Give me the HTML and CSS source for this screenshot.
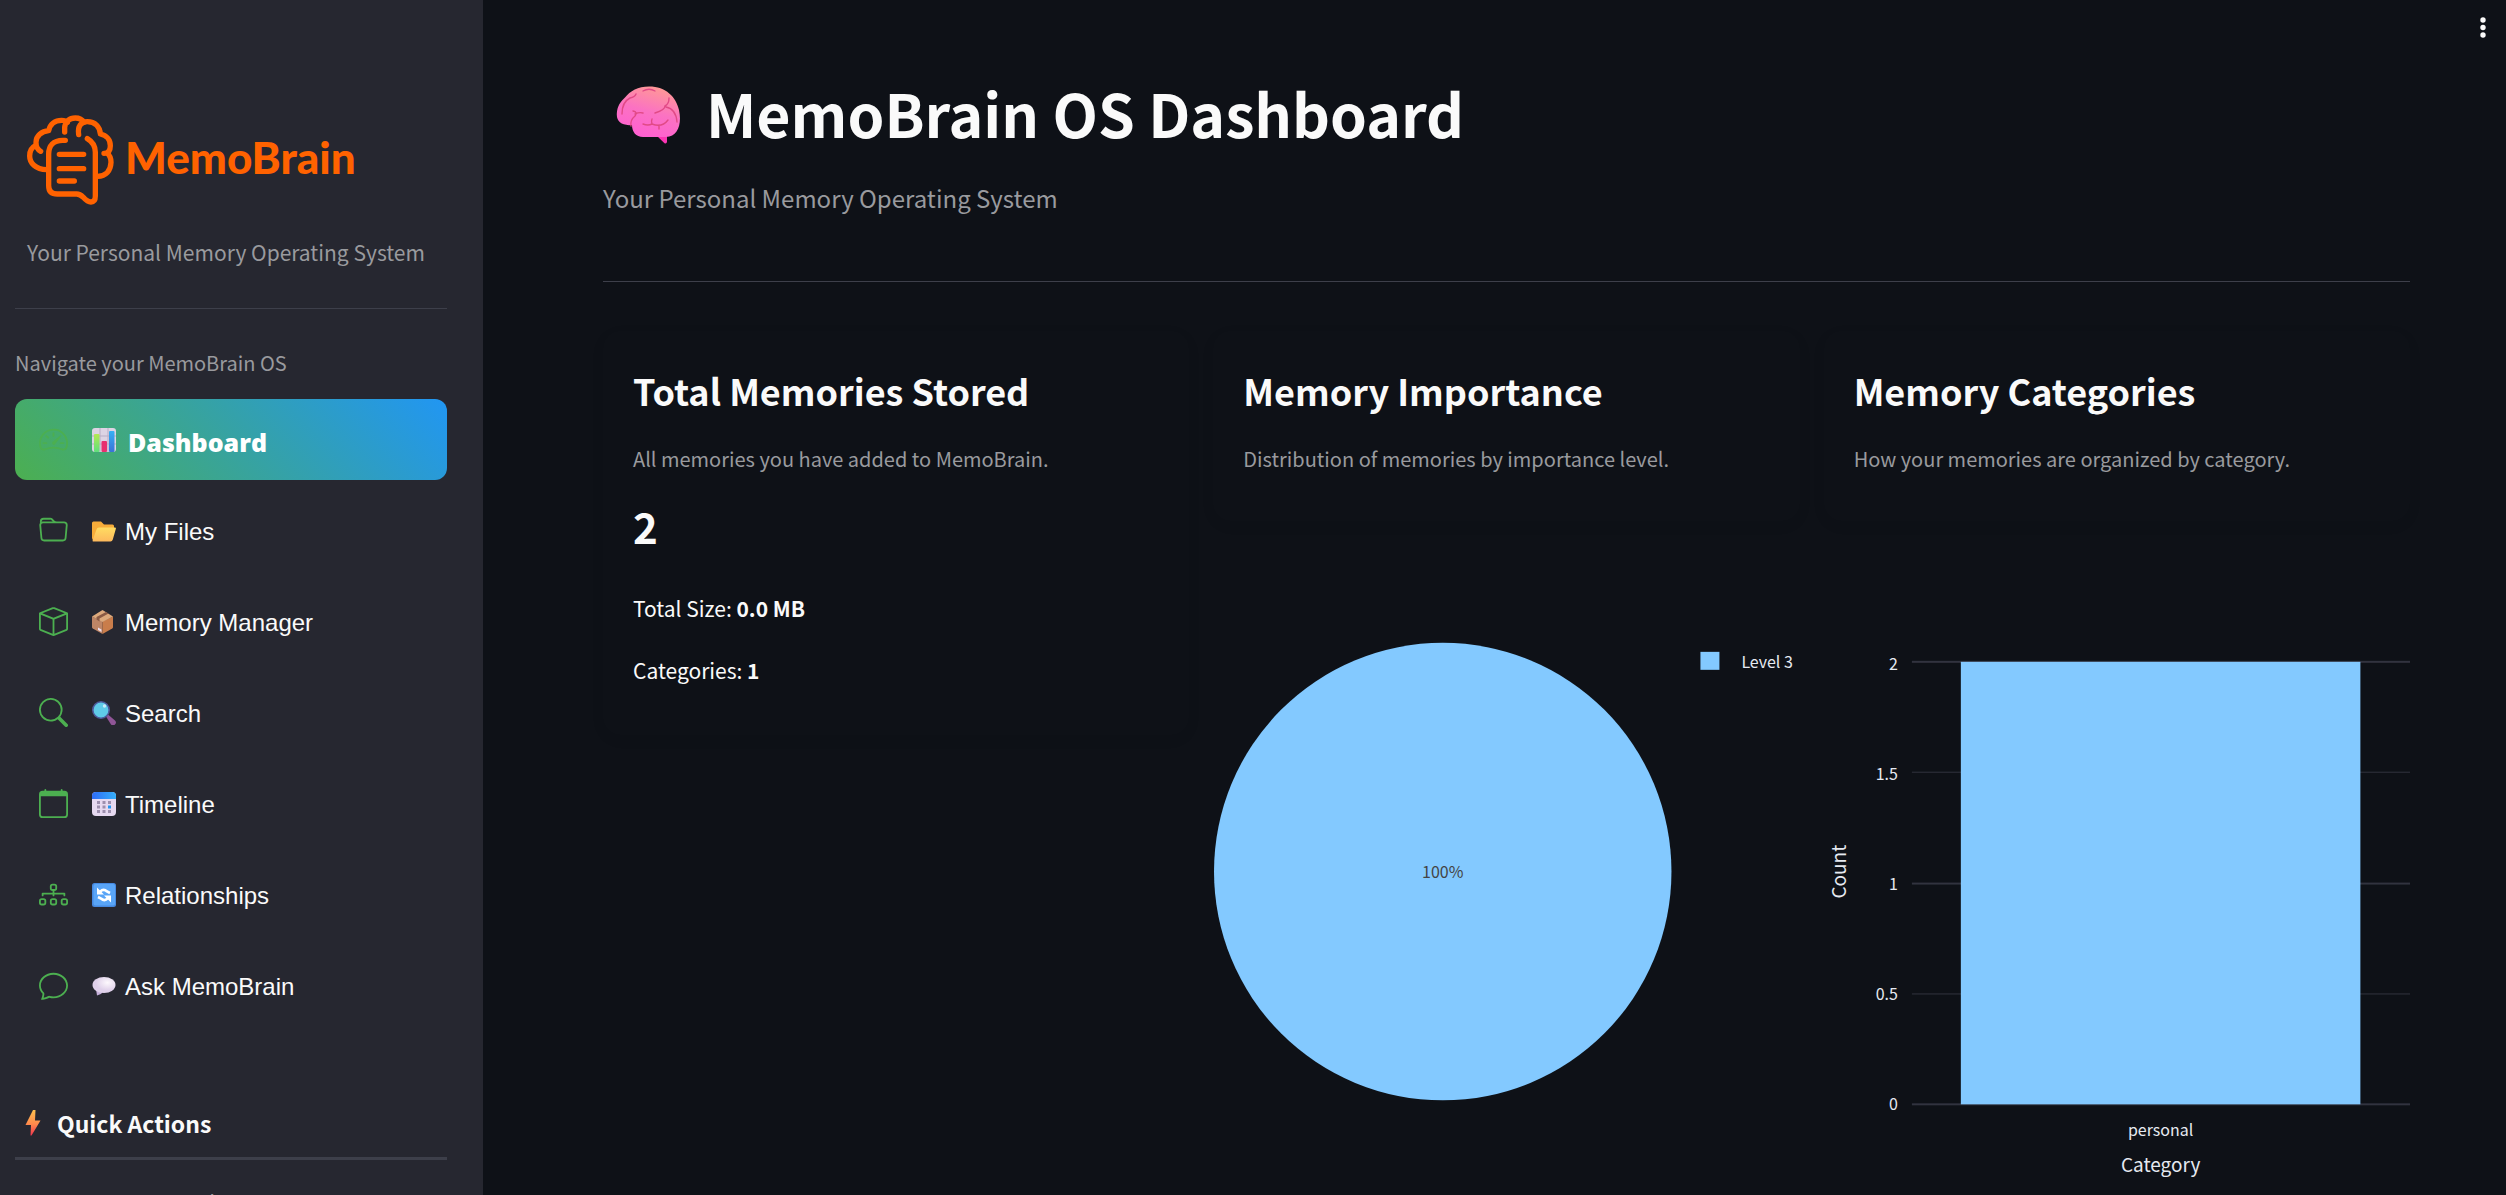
FILE: index.html
```html
<!DOCTYPE html>
<html lang="en">
<head>
<meta charset="utf-8">
<title>MemoBrain OS Dashboard</title>
<link rel="stylesheet" href="styles.css">
</head>
<body>
<div class="app">
  <aside class="sidebar">
    <div class="logo">
      <svg class="logo-mark" viewBox="78 70 267 276" fill="none" stroke="#ff6200" stroke-width="16" stroke-linecap="round" stroke-linejoin="round" aria-hidden="true">
        <path d="M196 149H188C160 149 146 165 146 190V285Q146 310 172 310H230Q240 310 250 320Q262 334 273 334Q286 334 286 316V185Q286 158 262 144"/>
        <path d="M178 191H251M178 234H251M178 271H223"/>
        <path d="M140 237C106 237 89 216 89 196C89 180 96 170 106 165"/>
        <path d="M122 182C112 177 108 168 108 155C108 135 125 122 146 120C150 100 165 89 185 89Q197 89 202 95"/>
        <path d="M194 124V110C196 92 208 82 226 82C238 82 247 87 252 95"/>
        <path d="M236 132C232 106 244 93 262 93C285 93 300 108 301 130C320 134 331 148 331 165C331 180 325 188 312 188"/>
        <path d="M322 188C330 195 333 205 333 215C332 240 318 256 293 257"/>
      </svg>
      <span class="logo-name">MemoBrain</span>
    </div>
    <p class="tagline">Your Personal Memory Operating System</p>
    <hr class="rule">
    <p class="nav-label">Navigate your MemoBrain OS</p>
    <nav class="nav">
      <a class="nav-item active" href="#dashboard">
        <svg class="nav-icon" viewBox="0 0 16 16" fill="currentColor" aria-hidden="true"><path d="M8 4a.5.5 0 0 1 .5.5V6a.5.5 0 0 1-1 0V4.500A.5.5 0 0 1 8 4zM3.732 5.732a.5.5 0 0 1 .707 0l.915.914a.5.5 0 1 1-.708.708l-.914-.915a.5.5 0 0 1 0-.707zM2 10a.5.5 0 0 1 .5-.5h1.586a.5.5 0 0 1 0 1H2.500A.5.5 0 0 1 2 10zm9.500 0a.5.5 0 0 1 .5-.5h1.500a.5.5 0 0 1 0 1H12a.5.5 0 0 1-.5-.5zm.754-4.246a.389.389 0 0 0-.527-.02L7.547 9.310a.91.91 0 1 0 1.302 1.258l3.434-4.297a.389.389 0 0 0-.029-.518z"/><path fill-rule="evenodd" d="M0 10a8 8 0 1 1 15.547 2.661c-.442 1.253-1.845 1.602-2.932 1.250C11.309 13.488 9.475 13 8 13c-1.474 0-3.310.488-4.615.911-1.087.352-2.490.003-2.932-1.250A7.988 7.988 0 0 1 0 10zm8-7a7 7 0 0 0-6.603 9.329c.203.575.923.876 1.680.630C4.397 12.533 6.358 12 8 12s3.604.532 4.923.960c.757.245 1.477-.056 1.680-.631A7 7 0 0 0 8 3z"/></svg>
        <svg class="emoji" viewBox="0 0 24 24" aria-hidden="true"><defs><linearGradient id="g1" x2="0" y2="1"><stop stop-color="#b5e853"/><stop offset="1" stop-color="#5fe07c"/></linearGradient><linearGradient id="g2" x2="0" y2="1"><stop stop-color="#36b1f5"/><stop offset="1" stop-color="#3a72d8"/></linearGradient></defs><rect width="24" height="24" rx="3" fill="#ddd4e4"/><path d="M0 8h24M0 16h24M8 0v24M16 0v24" stroke="#b9adc6" stroke-width="1"/><rect x="2" y="6" width="5.500" height="18" rx="1" fill="url(#g1)"/><rect x="9.500" y="13" width="5.500" height="11" rx="1" fill="#e8306f"/><rect x="17" y="3" width="5.500" height="21" rx="1" fill="url(#g2)"/></svg>
        <span>Dashboard</span>
      </a>
      <a class="nav-item" href="#files">
        <svg class="nav-icon" viewBox="0 0 16 16" fill="currentColor" aria-hidden="true"><path d="M.54 3.87.5 3a2 2 0 0 1 2-2h3.672a2 2 0 0 1 1.414.586l.828.828A2 2 0 0 0 9.828 3h3.982a2 2 0 0 1 1.992 2.181l-.637 7A2 2 0 0 1 13.174 14H2.826a2 2 0 0 1-1.991-1.819l-.637-7a1.990 1.990 0 0 1 .342-1.310zM2.190 4a1 1 0 0 0-.996 1.090l.637 7a1 1 0 0 0 .995.910h10.348a1 1 0 0 0 .995-.910l.637-7A1 1 0 0 0 13.810 4H2.190zm4.690-1.707A1 1 0 0 0 6.172 2H2.500a1 1 0 0 0-1 .981l.006.139C1.720 3.042 1.950 3 2.190 3h5.396l-.707-.707z"/></svg>
        <svg class="emoji" viewBox="0 0 24 24" aria-hidden="true"><defs><linearGradient id="g3" x2="0" y2="1"><stop stop-color="#ffdc62"/><stop offset="1" stop-color="#fdb95c"/></linearGradient></defs><path d="M0 4a1.500 1.500 0 0 1 1.500-1.500H9L12 5.500h8.500A1.500 1.500 0 0 1 22 7v4L18 21H2a2 2 0 0 1-2-2z" fill="#f7ac3a"/><path d="M4.500 10.500Q5 8.500 7 8.500H23Q24.200 8.500 23.800 10L20.800 20.500Q20.200 22.500 18.500 22.500H1.500Q.3 22.500.7 21z" fill="url(#g3)"/></svg>
        <span>My Files</span>
      </a>
      <a class="nav-item" href="#manager">
        <svg class="nav-icon" viewBox="0 0 16 16" fill="currentColor" aria-hidden="true"><path d="M8.186 1.113a.5.5 0 0 0-.372 0L1.846 3.500 8 5.961 14.154 3.500 8.186 1.113zM15 4.239l-6.500 2.600v7.922l6.500-2.600V4.240zM7.500 14.762V6.838L1 4.239v7.923l6.500 2.600zM7.443.184a1.500 1.500 0 0 1 1.114 0l7.129 2.852A.5.5 0 0 1 16 3.500v8.662a1 1 0 0 1-.629.928l-7.185 2.874a.5.5 0 0 1-.372 0L.63 13.090a1 1 0 0 1-.63-.928V3.500a.5.5 0 0 1 .314-.464L7.443.184z"/></svg>
        <svg class="emoji" viewBox="0 0 24 24" aria-hidden="true"><path d="M0 6.500 10.500 11.500V24L.8 18.500Q0 18 0 17z" fill="#bd8566"/><path d="M10.500 11.500 21 6.500V17Q21 18 20.200 18.500L10.500 24z" fill="#c97d4b"/><path d="M0 6.500 10.500 0 21 6.500 10.500 12z" fill="#dca97c"/><path d="M4.500 9.500V7L14 2l2.500 1.500L7.500 8.500v3z" fill="#8a5a44"/><path d="M6 17.500l3.500 2v2.500L6 20z" fill="#eee0f0"/></svg>
        <span>Memory Manager</span>
      </a>
      <a class="nav-item" href="#search">
        <svg class="nav-icon" viewBox="0 0 16 16" fill="currentColor" aria-hidden="true"><path d="M11.742 10.344a6.500 6.500 0 1 0-1.397 1.398h-.001c.03.04.062.078.098.115l3.850 3.850a1 1 0 0 0 1.415-1.414l-3.850-3.850a1.007 1.007 0 0 0-.115-.1zM12 6.500a5.500 5.500 0 1 1-11 0 5.500 5.500 0 0 1 11 0z"/></svg>
        <svg class="emoji" viewBox="0 0 24 24" aria-hidden="true"><path d="M14 15.500l2-2 7 6a2.800 2.800 0 0 1-4 4z" fill="#8f5596"/><circle cx="9" cy="9" r="8.200" fill="#5fcbe8" stroke="#4e5a9c" stroke-width="1.600"/><circle cx="12.500" cy="5" r="1.700" fill="#c8ecf8"/></svg>
        <span>Search</span>
      </a>
      <a class="nav-item" href="#timeline">
        <svg class="nav-icon" viewBox="0 0 16 16" fill="currentColor" aria-hidden="true"><path d="M3.500 0a.5.5 0 0 1 .5.5V1h8V.5a.5.5 0 0 1 1 0V1h1a2 2 0 0 1 2 2v11a2 2 0 0 1-2 2H2a2 2 0 0 1-2-2V3a2 2 0 0 1 2-2h1V.5a.5.5 0 0 1 .5-.5zM1 4v10a1 1 0 0 0 1 1h12a1 1 0 0 0 1-1V4H1z"/></svg>
        <svg class="emoji" viewBox="0 0 24 24" aria-hidden="true"><defs><linearGradient id="g4"><stop stop-color="#2f6cf6"/><stop offset="1" stop-color="#35b0fb"/></linearGradient></defs><rect width="24" height="24" rx="4" fill="#e6d9f0"/><path d="M0 7V4a4 4 0 0 1 4-4h16a4 4 0 0 1 4 4v3z" fill="url(#g4)"/><path d="M5 9h3v3H5zm5.500 0h3v3h-3zM16 9h3v3h-3zM5 13.500h3v3H5zm5.500 0h3v3h-3zM5 18h3v3H5zm5.500 0h3v3h-3zM16 18h3v3h-3z" fill="#9d8fae"/><path d="M16 13.500h3v3h-3z" fill="#2196f3"/></svg>
        <span>Timeline</span>
      </a>
      <a class="nav-item" href="#relationships">
        <svg class="nav-icon" viewBox="0 0 16 16" fill="currentColor" fill-rule="evenodd" aria-hidden="true"><path d="M6 3.500A1.500 1.500 0 0 1 7.500 2h1A1.500 1.500 0 0 1 10 3.500v1A1.500 1.500 0 0 1 8.500 6v1H14a.5.5 0 0 1 .5.5v1a.5.5 0 0 1-1 0V8h-5v.5a.5.5 0 0 1-1 0V8h-5v.5a.5.5 0 0 1-1 0v-1A.5.5 0 0 1 2 7h5.500V6A1.500 1.500 0 0 1 6 4.500v-1zM8.500 5a.5.5 0 0 0 .5-.5v-1a.5.5 0 0 0-.5-.5h-1a.5.5 0 0 0-.5.5v1a.5.5 0 0 0 .5.5h1zM0 11.500A1.500 1.500 0 0 1 1.500 10h1A1.500 1.500 0 0 1 4 11.500v1A1.500 1.500 0 0 1 2.500 14h-1A1.500 1.500 0 0 1 0 12.500v-1zm1.500-.5a.5.5 0 0 0-.5.5v1a.5.5 0 0 0 .5.5h1a.5.5 0 0 0 .5-.5v-1a.5.5 0 0 0-.5-.5h-1zm4.500.5A1.500 1.500 0 0 1 7.500 10h1a1.500 1.500 0 0 1 1.500 1.500v1A1.500 1.500 0 0 1 8.500 14h-1A1.500 1.500 0 0 1 6 12.500v-1zm1.500-.5a.5.5 0 0 0-.5.5v1a.5.5 0 0 0 .5.5h1a.5.5 0 0 0 .5-.5v-1a.5.5 0 0 0-.5-.5h-1zm4.500.5a1.500 1.500 0 0 1 1.500-1.500h1a1.500 1.500 0 0 1 1.500 1.500v1a1.500 1.500 0 0 1-1.500 1.500h-1a1.500 1.500 0 0 1-1.500-1.500v-1zm1.500-.5a.5.5 0 0 0-.5.5v1a.5.5 0 0 0 .5.5h1a.5.5 0 0 0 .5-.5v-1a.5.5 0 0 0-.5-.5h-1z"/></svg>
        <svg class="emoji" viewBox="0 0 24 24" aria-hidden="true"><rect width="24" height="24" rx="2.500" fill="#4689e0"/><rect x="1.500" y="1" width="21.500" height="21.500" rx="2" fill="#59a5f7"/><path d="M8 8.800Q11.500 5.200 15 8.500L18 10M16 15.200Q12.500 18.800 9 15.500L6 14" fill="none" stroke="#fff" stroke-width="2.600"/><path d="M5 4.500v7h7zM19 19.500v-7h-7z" fill="#fff"/></svg>
        <span>Relationships</span>
      </a>
      <a class="nav-item" href="#ask">
        <svg class="nav-icon" viewBox="0 0 16 16" fill="currentColor" aria-hidden="true"><path d="M2.678 11.894a1 1 0 0 1 .287.801 10.970 10.970 0 0 1-.398 2c1.395-.323 2.247-.697 2.634-.893a1 1 0 0 1 .71-.074A8.060 8.060 0 0 0 8 14c3.996 0 7-2.807 7-6 0-3.192-3.004-6-7-6S1 4.808 1 8c0 1.468.617 2.830 1.678 3.894zm-.493 3.905a21.682 21.682 0 0 1-.713.129c-.2.032-.352-.176-.273-.362a9.680 9.680 0 0 0 .244-.637l.003-.01c.248-.72.45-1.548.524-2.319C.743 11.370 0 9.760 0 8c0-3.866 3.582-7 8-7s8 3.134 8 7-3.582 7-8 7a9.060 9.060 0 0 1-2.347-.306c-.52.263-1.639.742-3.468 1.105z"/></svg>
        <svg class="emoji" viewBox="0 0 24 24" aria-hidden="true"><defs><radialGradient id="g5" cx=".65" cy=".35"><stop stop-color="#fdf9fd"/><stop offset="1" stop-color="#dfd0ea"/></radialGradient></defs><path d="M4 15 5 21.500Q9 21 11 18z" fill="#c5b0da"/><ellipse cx="12" cy="11" rx="11.500" ry="8" fill="url(#g5)"/></svg>
        <span>Ask MemoBrain</span>
      </a>
    </nav>
    <h2 class="quick-title">
      <svg class="bolt" viewBox="0 0 16 26" aria-hidden="true"><defs><linearGradient id="g6" x2="0" y2="1"><stop stop-color="#fcc04e"/><stop offset=".55" stop-color="#ff8a4c"/><stop offset="1" stop-color="#f0344e"/></linearGradient></defs><path d="M8 0H10.500L10 10.500H15.500L6.500 25.500H5.500L6 15H.5z" fill="url(#g6)"/></svg>
      Quick Actions
    </h2>
    <hr class="rule thick">
    <p class="quick-note">Access common tools</p>
  </aside>

  <main class="main">
    <button class="menu" aria-label="Main menu">
      <svg viewBox="0 0 6 21" fill="#fafafa" aria-hidden="true"><circle cx="3" cy="3" r="2.700"/><circle cx="3" cy="10.500" r="2.700"/><circle cx="3" cy="18" r="2.700"/></svg>
    </button>
    <h1 class="title">
      <svg class="brain" viewBox="0 0 65 58" aria-hidden="true">
        <defs><linearGradient id="g7" x1=".7" y1="0" x2=".35" y2="1"><stop stop-color="#ff9a94"/><stop offset=".5" stop-color="#fb72c2"/><stop offset="1" stop-color="#ff5fd2"/></linearGradient></defs>
        <path d="M41 50H51V56Q50.500 58 48.500 57.200z" fill="#fb36b4"/>
        <path d="M16 39C6 40 .5 36 .8 28C1 20 5 15 9 11.500C14 5 22 .5 33 .5C50 .5 60 11 63 24C66 38 62 51 50 51H27C20 51 16 46 16 39z" fill="url(#g7)"/>
        <g fill="none" stroke="#e14a86" stroke-width="1.400" stroke-linecap="round"><path d="M6 28C6 19 10 14 14 12Q19 11 20 8M27 5Q33 1.500 39 5M39 27Q49 24 49 20Q53 18 53 12M50 21Q60 23 61 36M15 40Q14 34 19 30Q22 26 17 25M19 28Q23 26 27 27M27 38Q32 40 36 38Q46 42 52 34M36 38Q35 35 36 33M43 39V43"/></g>
      </svg>
      MemoBrain OS Dashboard
    </h1>
    <p class="subtitle">Your Personal Memory Operating System</p>
    <hr class="rule">
    <div class="columns">
      <section class="column">
        <div class="card stats">
          <h2>Total Memories Stored</h2>
          <p class="desc">All memories you have added to MemoBrain.</p>
          <p class="total">2</p>
          <p class="fact">Total Size: <b>0.0 MB</b></p>
          <p class="fact">Categories: <b>1</b></p>
        </div>
      </section>
      <section class="column">
        <div class="card">
          <h2>Memory Importance</h2>
          <p class="desc">Distribution of memories by importance level.</p>
        </div>
        <svg class="chart" viewBox="0 0 587 670" role="img" aria-label="Memories by importance level">
          <circle cx="230" cy="351" r="229" fill="#83c9ff"/>
          <text class="slice" x="230" y="357" text-anchor="middle">100%</text>
          <rect x="488" y="131" width="19" height="18" fill="#83c9ff"/>
          <text class="tick" x="529" y="147">Level 3</text>
        </svg>
      </section>
      <section class="column">
        <div class="card">
          <h2>Memory Categories</h2>
          <p class="desc">How your memories are organized by category.</p>
        </div>
        <svg class="chart" viewBox="0 0 587 670" role="img" aria-label="Memory count by category">
          <g fill="#31333f"><rect x="88" y="140" width="499" height="2"/><rect x="88" y="251" width="499" height="1"/><rect x="88" y="362" width="499" height="2"/><rect x="88" y="473" width="499" height="1"/><rect x="88" y="583" width="499" height="2"/></g>
          <rect x="137" y="141" width="400" height="443" fill="#83c9ff"/>
          <g class="tick" text-anchor="end"><text x="74" y="149">2</text><text x="74" y="259">1.5</text><text x="74" y="369">1</text><text x="74" y="480">0.5</text><text x="74" y="590">0</text></g>
          <text class="tick" x="337" y="616" text-anchor="middle">personal</text>
          <text class="axis" x="337" y="652" text-anchor="middle">Category</text>
          <text class="axis" transform="translate(22 351) rotate(-90)" text-anchor="middle">Count</text>
        </svg>
      </section>
    </div>
  </main>
</div>
</body>
</html>
```
FILE: styles.css
```css
* { box-sizing: border-box; }

body {
  margin: 0;
  background: #0e1117;
  color: #fafafa;
  font-family: "Noto Sans CJK SC", "Noto Sans", sans-serif;
}

h1, h2, p { margin: 0; }

.app {
  display: flex;
  height: 100vh;
}

.rule {
  width: 100%;
  height: 1px;
  margin: 0;
  border: 0;
  background: #3d3f4a;
}

/* Sidebar */
.sidebar {
  flex: none;
  width: 483px;
  padding: 114px 36px 0 15px;
  overflow: hidden;
  background: #262730;
}

.logo {
  display: flex;
  align-items: center;
  gap: 10px;
  padding-left: 11px;
}

.logo-mark {
  width: 89px;
  height: 92px;
}

.logo-name {
  padding-bottom: 6px;
  color: #ff6200;
  font: 900 44px/60px Lato, sans-serif;
}

.tagline,
.nav-label,
.quick-note {
  color: #999a9e;
  font-size: 21px;
  line-height: 32px;
}

.tagline { margin: 30px 0 40px 12px; }

.nav-label {
  margin: 38px 0 20px;
  font-size: 20px;
}

.nav {
  display: flex;
  flex-direction: column;
  gap: 10px;
}

.nav-item {
  display: flex;
  align-items: center;
  height: 81px;
  padding-left: 24px;
  border-radius: 12px;
  color: #fafafa;
  font: 24px/36px "Liberation Sans", Arial, sans-serif;
  text-decoration: none;
}

.nav-item span { padding-top: 2px; }

.nav-item.active {
  background: linear-gradient(45deg, #4caf50, #2196f3);
  color: #fff;
  font-family: "Open Sans", sans-serif;
  font-size: 25px;
  font-weight: 800;
}

.nav-item.active span { padding: 5px 0 0 3px; }

.nav-icon {
  width: 29px;
  height: 29px;
  margin-right: 24px;
  color: #4caf50;
}

.emoji {
  width: 24px;
  height: 24px;
  margin-right: 9px;
}

.quick-title {
  display: flex;
  align-items: center;
  gap: 16px;
  margin: 77px 0 14px;
  padding-left: 10px;
  font-size: 23px;
  line-height: 40px;
}

.bolt {
  width: 16px;
  height: 26px;
}

.rule.thick { height: 3px; }

.quick-note { margin-top: 26px; }

/* Main area */
.main {
  position: relative;
  flex: 1;
  min-width: 0;
  padding: 73px 96px 0 120px;
}

.menu {
  position: absolute;
  top: 12px;
  right: 8px;
  width: 30px;
  height: 32px;
  padding: 5px 12px 6px;
  border: 0;
  background: none;
}

.menu svg {
  display: block;
  width: 6px;
  height: 21px;
}

.title {
  display: flex;
  align-items: center;
  gap: 25px;
  padding-left: 13px;
  font-size: 59px;
  line-height: 80px;
}

.brain {
  width: 65px;
  height: 62px;
  padding-top: 4px;
}

.subtitle {
  margin: 27px 0 65px;
  color: #999a9e;
  font-size: 24px;
  line-height: 36px;
}

.columns {
  display: grid;
  grid-template-columns: repeat(3, 1fr);
  gap: 24px;
  margin-top: 49px;
}

.card {
  padding: 36px 30px 46px;
  border-radius: 18px;
  box-shadow: 0 4px 14px rgba(0, 0, 0, 0.06);
}

.card h2 {
  font-size: 36px;
  line-height: 46px;
}

.desc {
  margin-top: 30px;
  color: #999a9e;
  font-size: 20px;
  line-height: 32px;
}

.total {
  margin: 26px 0 40px;
  font-size: 42px;
  font-weight: 700;
  line-height: 50px;
}

.fact {
  margin-bottom: 28px;
  font-size: 21px;
  line-height: 34px;
}

.stats { padding-bottom: 20px; }

.chart {
  display: block;
  width: 100%;
}

.tick {
  fill: #e6eaf1;
  font-size: 16px;
}

.slice {
  fill: #444;
  font-size: 16px;
}

.axis {
  fill: #e6eaf1;
  font-size: 19px;
}
```
